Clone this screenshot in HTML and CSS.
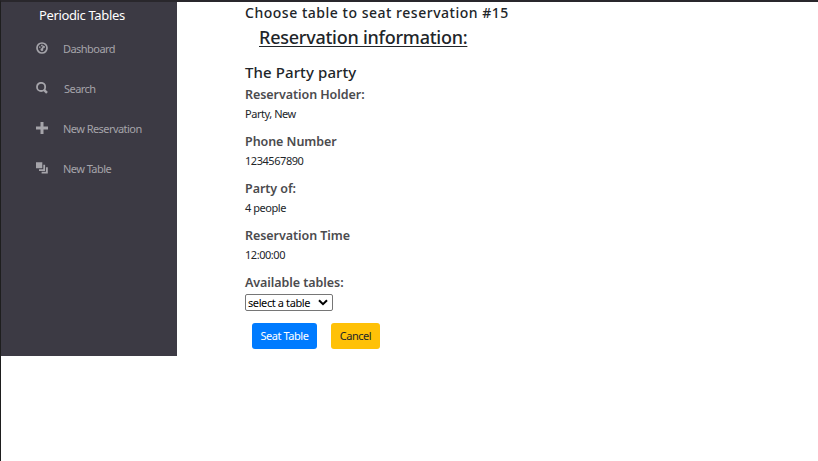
FILE: index.html
```html
<!DOCTYPE html>
<html lang="en">
<head>
<meta charset="utf-8">
<title>Periodic Tables</title>
<link rel="stylesheet" href="styles.css">
</head>
<body>
<div class="app">
  <nav class="sidebar">
    <a class="brand">Periodic Tables</a>
    <ul class="menu">
      <li><svg class="icon" viewBox="0 0 12 12"><circle cx="6" cy="6" r="5" fill="none" stroke="currentColor" stroke-width="1.7"/><path d="M3 4.4h1.5v1.4H3zM5.1 2.8h1.6v1.5H5.1zM7.6 4.3H9v1.4H7.6zM7.1 3.6 8.1 4 7.2 7.2A1.4 1.4 0 1 1 5.6 6.2z" fill="currentColor"/></svg><span class="dashboard">Dashboard</span></li>
      <li><svg class="icon" viewBox="0 0 12 12"><circle cx="5.1" cy="4.9" r="4.1" fill="none" stroke="currentColor" stroke-width="1.8"/><path d="m7.8 7.7 3.2 3.2" stroke="currentColor" stroke-width="2.5"/></svg><span class="search">Search</span></li>
      <li><svg class="icon" viewBox="0 0 12 12"><path d="M4.5 0h3v4.5H12v3H7.5V12h-3V7.5H0v-3h4.5z" fill="currentColor"/></svg><span class="new-res">New Reservation</span></li>
      <li><svg class="icon" viewBox="0 0 12 12"><path d="M0 .3h6.3v6H0zM7.3 2.8h1.8V9H3V7.2h4.3zM10 5.3h1.8v6.1H5.6V9.8H10z" fill="currentColor"/></svg><span class="new-table">New Table</span></li>
    </ul>
  </nav>
  <main class="content">
    <h1 class="title">Choose table to seat reservation #15</h1>
    <h2 class="subtitle">Reservation information:</h2>
    <h3 class="party">The Party party</h3>
    <h4 class="label holder">Reservation Holder:</h4>
    <p class="value name">Party, New</p>
    <h4 class="label phone">Phone Number</h4>
    <p class="value number">1234567890</p>
    <h4 class="label size">Party of:</h4>
    <p class="value people">4 people</p>
    <h4 class="label time">Reservation Time</h4>
    <p class="value clock">12:00:00</p>
    <h4 class="label tables">Available tables:</h4>
    <div class="select"><span>select a table</span><svg class="chevron" viewBox="0 0 10 7"><path d="m1 1.2 4 4 4-4" fill="none" stroke="currentColor" stroke-width="2"/></svg></div>
    <div class="actions"><button class="btn seat">Seat Table</button><button class="btn cancel">Cancel</button></div>
  </main>
</div>
</body>
</html>
```

FILE: styles.css
```css
* { box-sizing: border-box; }
body {
  margin: 0;
  height: 461px;
  overflow: hidden;
  background: #fff;
  border-top: 2px solid #29272c;
  border-left: 1px solid #1e1e1e;
  font-family: "Noto Sans", "Open Sans", sans-serif;
  color: #212529;
}
h1, h2, h3, h4, p, ul { margin: 0; padding: 0; }
.app { display: flex; align-items: flex-start; }
.sidebar { width: 176px; height: 354px; background: #3c3a44; }
.brand { display: block; height: 26px; padding-left: 38px; font-size: 13px; line-height: 27px; letter-spacing: -.36px; color: #fff; }
.menu { list-style: none; }
.menu li { display: flex; height: 40px; padding-left: 35px; align-items: center; font-size: 11px; letter-spacing: -.55px; color: #a5a4aa; white-space: nowrap; }
.icon { width: 12px; height: 12px; margin: -1px 15px 0 0; flex: none; }
.menu .search { margin-left: 1px; }
.content { padding-left: 68px; white-space: nowrap; }
.title { height: 21px; font-size: 14px; line-height: 21px; font-weight: 500; letter-spacing: .52px; }
.subtitle { height: 30px; padding-left: 14px; font-size: 18px; line-height: 29px; font-weight: 500; letter-spacing: -.25px; text-decoration: underline; text-decoration-thickness: 1px; text-underline-offset: 2px; }
.party { height: 30px; margin-top: 4px; margin-bottom: 1px; font-size: 15px; line-height: 30px; font-weight: 500; letter-spacing: .1px; }
.label { height: 16px; margin-top: -1px; font-size: 12.5px; line-height: 16px; font-weight: 600; letter-spacing: -.06px; color: #4b4b4e; }
.value { height: 17px; margin: 2px 0 13px; font-size: 11px; line-height: 17px; letter-spacing: -.45px; color: #212529; }
.select { display: flex; align-items: center; width: 88px; height: 17px; margin-top: 3px; padding-left: 2px; border: 1px solid #767676; border-radius: 2px; font-size: 11px; line-height: 15px; letter-spacing: -.4px; color: #000; }
.chevron { width: 10px; height: 7px; margin-left: auto; margin-right: 4px; }
.actions { display: flex; gap: 14px; margin: 12px 0 0 7px; }
.btn { height: 26px; padding: 0; border: 0; border-radius: 3px; font: 11px/26px "Noto Sans", sans-serif; letter-spacing: -.45px; }
.seat { width: 65px; background: #007bff; color: #fff; }
.cancel { width: 49px; background: #ffc107; color: #212529; }
```
